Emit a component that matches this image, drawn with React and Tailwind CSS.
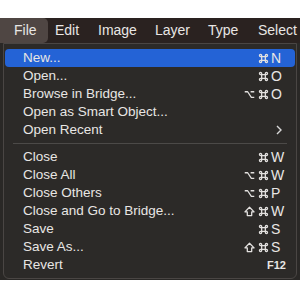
const menus = [
  { name: 'File', cls: 'w-[48px] pl-[14px] bg-[#4f4643] rounded-r-[5px]' },
  { name: 'Edit', cls: 'w-[43px] ml-[7px]' },
  { name: 'Image', cls: 'w-[57px]' },
  { name: 'Layer', cls: 'w-[53px]' },
  { name: 'Type', cls: 'w-[50px]' },
  { name: 'Select', cls: 'w-[42px]' },
]

const groupA = [
  { label: 'New...', mods: ['cmd'], key: 'N', active: true },
  { label: 'Open...', mods: ['cmd'], key: 'O' },
  { label: 'Browse in Bridge...', mods: ['opt', 'cmd'], key: 'O' },
  { label: 'Open as Smart Object...' },
  { label: 'Open Recent', sub: true },
]

const groupB = [
  { label: 'Close', mods: ['cmd'], key: 'W' },
  { label: 'Close All', mods: ['opt', 'cmd'], key: 'W' },
  { label: 'Close Others', mods: ['opt', 'cmd'], key: 'P' },
  { label: 'Close and Go to Bridge...', mods: ['shift', 'cmd'], key: 'W' },
  { label: 'Save', mods: ['cmd'], key: 'S' },
  { label: 'Save As...', mods: ['shift', 'cmd'], key: 'S' },
  { label: 'Revert', fkey: 'F12' },
]

const glyphs = {
  cmd: 'M4 4V2.8A1.2 1.2 0 1 0 2.8 4H9.2A1.2 1.2 0 1 0 8 2.8V9.2A1.2 1.2 0 1 0 9.2 8H2.8A1.2 1.2 0 1 0 4 9.2Z',
  opt: 'M0.8 3H4L8 9.2H11.2M7.2 3H11.2',
  shift: 'M6 1.3L11 6.4H8.4V10.4H3.6V6.4H1Z',
}

function Mod({ type }) {
  return (
    <span className="w-[14px] flex justify-center">
      <svg width="11" height="11" viewBox="0 0 12 12">
        <path d={glyphs[type]} fill="none" stroke="#e4e2e0" strokeWidth="1.4" strokeLinejoin="round" />
      </svg>
    </span>
  )
}

function Row({ item }) {
  return (
    <div
      className={
        'h-[18px] mx-[1px] pl-[18px] pr-[12px] flex items-center justify-between rounded-[4px] ' +
        (item.active ? 'bg-[#2463d6]' : '')
      }
    >
      <span>{item.label}</span>
      {item.key && (
        <span className="flex items-center">
          {item.mods.map((m) => (
            <Mod key={m} type={m} />
          ))}
          <span className="w-[12px] ml-[1px] text-[14px]">{item.key}</span>
        </span>
      )}
      {item.fkey && <span className="text-[11px] font-bold mr-[-3px]">{item.fkey}</span>}
      {item.sub && (
        <svg width="6" height="10" viewBox="0 0 6 10" className="mr-[1px]">
          <path d="M1 1l4 4-4 4" fill="none" stroke="#d8d8d8" strokeWidth="1.4" />
        </svg>
      )}
    </div>
  )
}

export default function App() {
  return (
    <div className="w-[300px] h-[300px] bg-white font-['Liberation_Sans',Arial,sans-serif] text-[13.5px] text-[#e8e6e4] overflow-hidden">
      <div className="h-[18px]" />
      <div className="h-[25px] bg-[#2a2220] flex items-center text-[14px]">
        {menus.map((m) => (
          <div key={m.name} className={'h-[25px] shrink-0 flex items-center ' + m.cls}>
            {m.name}
          </div>
        ))}
      </div>
      <div className="h-[237px] bg-[#2a2826] px-[3px]">
        <div className="h-[236px] bg-[#2c2a28] border border-[#4a4644] rounded-b-[6px] pt-[5px]">
          {groupA.map((it) => (
            <Row key={it.label} item={it} />
          ))}
          <div className="h-[9px] flex items-center px-[9px]">
            <div className="h-px w-full bg-[#4c4a48]" />
          </div>
          {groupB.map((it) => (
            <Row key={it.label} item={it} />
          ))}
        </div>
      </div>
    </div>
  )
}
